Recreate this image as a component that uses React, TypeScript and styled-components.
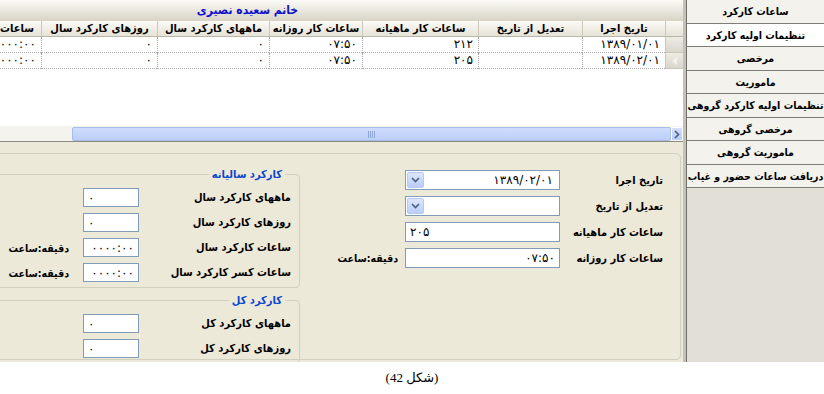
import React from 'react'
import styled, { createGlobalStyle } from 'styled-components'

const GlobalStyle = createGlobalStyle`
  html, body {
    margin: 0;
    padding: 0;
    background: #fff;
  }
  body {
    font-family: "DejaVu Sans Condensed", "DejaVu Sans", sans-serif;
    font-size: 11px;
    color: #000;
  }
`

const columns = [
  { title: 'تاریخ اجرا', width: 83 },
  { title: 'تعدیل از تاریخ', width: 104 },
  { title: 'ساعات کار ماهیانه', width: 116 },
  { title: 'ساعات کار روزانه', width: 93 },
  { title: 'ماههای کارکرد سال', width: 112 },
  { title: 'روزهای کارکرد سال', width: 116 },
  { title: 'ساعات کارکرد سال', width: 110 },
  { title: 'ساعات کسر کارکرد سال', width: 134 },
]

const rows = [
  ['۱۳۸۹/۰۱/۰۱', '', '۲۱۲', '۰۷:۵۰', '۰', '۰', '۰۰۰۰:۰۰', '۰۰۰۰:۰۰'],
  ['۱۳۸۹/۰۲/۰۱', '', '۲۰۵', '۰۷:۵۰', '۰', '۰', '۰۰۰۰:۰۰', '۰۰۰۰:۰۰'],
]

const navItems = [
  'ساعات کارکرد',
  'تنظیمات اولیه کارکرد',
  'مرخصی',
  'ماموریت',
  'تنظیمات اولیه کارکرد گروهی',
  'مرخصی گروهی',
  'ماموریت گروهی',
  'دریافت ساعات حضور و غیاب',
]

const Page = styled.div`
  width: 824px;
  height: 394px;
  overflow: hidden;
  direction: rtl;
  display: flex;
  flex-direction: column;
`

const Window = styled.div`
  height: 362px;
  flex: none;
  display: flex;
`

const Sidebar = styled.div`
  width: 138px;
  flex: none;
  box-sizing: border-box;
  border-left: 1px solid #6f6e68;
  background: #e2e0d6;
  display: flex;
  flex-direction: column;
`

const NavButton = styled.div<{ $active?: boolean }>`
  height: 23.5px;
  flex: none;
  box-sizing: border-box;
  border-bottom: 1px solid #7d7c75;
  background: ${p => (p.$active ? '#fff' : '#f3f2ec')};
  display: flex;
  align-items: center;
  justify-content: center;
  font-weight: bold;
  font-size: 10.5px;
  white-space: nowrap;
  overflow: hidden;
`

const Main = styled.div`
  width: 686px;
  flex: none;
  box-sizing: border-box;
  border-right: 3px solid #c4c2b8;
  display: flex;
  flex-direction: column;
  overflow: hidden;
`

const GridPanel = styled.div`
  height: 142px;
  flex: none;
  box-sizing: border-box;
  display: flex;
  flex-direction: column;
  background: #fff;
  border-bottom: 1px solid #8c8a80;
`

const GridClip = styled.div`
  flex: 1;
  min-height: 0;
  overflow: hidden;
`

const Sheet = styled.div`
  width: 886px;
`

const TitleBar = styled.div`
  height: 21px;
  box-sizing: border-box;
  padding-left: 15px;
  background: linear-gradient(#fbfaf6, #d7d4c6);
  color: #1212c8;
  font-weight: bold;
  font-size: 12px;
  text-align: center;
  line-height: 21px;
`

const Table = styled.div<{ $cols: string }>`
  display: grid;
  grid-template-columns: ${p => p.$cols};
  grid-auto-rows: 16px;
`

const HeaderCell = styled.div`
  box-sizing: border-box;
  background: linear-gradient(#fbfaf5, #e6e3d7);
  border-left: 1px solid #cbc8b8;
  border-bottom: 1px solid #b9b6a7;
  font-weight: bold;
  font-size: 11px;
  line-height: 15px;
  text-align: center;
  white-space: nowrap;
  overflow: hidden;
`

const RowHead = styled.div`
  box-sizing: border-box;
  background: linear-gradient(#eeece3, #d9d7cc);
  border-left: 1px solid #c9c7bc;
  border-bottom: 1px solid #c9c7bc;
  display: flex;
  align-items: center;
  justify-content: center;
`

const Cell = styled.div`
  box-sizing: border-box;
  border-left: 1px dotted #a9a9a9;
  border-bottom: 1px dotted #a9a9a9;
  padding: 0 5px;
  font-family: "DejaVu Sans", sans-serif;
  font-size: 12px;
  letter-spacing: 0.5px;
  line-height: 15px;
  text-align: right;
  white-space: nowrap;
  overflow: hidden;
`

const HScroll = styled.div`
  height: 15px;
  flex: none;
  box-sizing: border-box;
  padding: 1px 0 0;
  display: flex;
  background: #f4f3ee;
`

const ScrollArrow = styled.div`
  width: 12px;
  flex: none;
  box-sizing: border-box;
  border: 1px solid #fff;
  border-radius: 2px;
  background: linear-gradient(#d3defc, #b8cbf7);
  display: flex;
  align-items: center;
  justify-content: center;
`

const ScrollThumb = styled.div`
  width: 599px;
  flex: none;
  box-sizing: border-box;
  border: 1px solid #a8bde8;
  border-radius: 2px;
  background: linear-gradient(#cfdcfd, #bccff9);
  display: flex;
  align-items: center;
  justify-content: center;
`

const FormPanel = styled.div`
  flex: 1;
  box-sizing: border-box;
  background: #ece9d8;
  padding: 11px 2px 2px 0;
  display: flex;
  overflow: hidden;
`

const Frame = styled.div`
  width: 720px;
  flex: none;
  box-sizing: border-box;
  border: 1px solid #d0d0bf;
  border-radius: 5px;
  padding-right: 17px;
  display: flex;
`

const MainForm = styled.div`
  flex: none;
  padding-top: 16px;
  display: grid;
  grid-template-columns: 103px 155px 68px;
  grid-auto-rows: 20px;
  row-gap: 6px;
  align-content: start;
`

const Label = styled.div`
  font-weight: bold;
  font-size: 11px;
  white-space: nowrap;
  display: flex;
  align-items: center;
`

const Unit = styled.div<{ $gap: number }>`
  font-weight: bold;
  font-size: 10.5px;
  white-space: nowrap;
  margin-right: ${p => p.$gap}px;
  display: flex;
  align-items: center;
`

const Field = styled.div<{ $align?: 'left' | 'right' }>`
  box-sizing: border-box;
  border: 1px solid #7f9db9;
  background: #fff;
  padding: 0 4px;
  font-family: "DejaVu Sans", sans-serif;
  font-size: 12px;
  letter-spacing: 0.5px;
  display: flex;
  align-items: center;
  justify-content: ${p => (p.$align === 'left' ? 'flex-end' : 'flex-start')};
  white-space: nowrap;
  overflow: hidden;
`

const ComboValue = styled.div`
  flex: 1;
  text-align: right;
  padding-right: 2px;
`

const DropButton = styled.div`
  width: 17px;
  height: 16px;
  flex: none;
  margin-left: -3px;
  box-sizing: border-box;
  border: 1px solid #b7c9f3;
  border-radius: 2px;
  background: linear-gradient(#dde7fd, #b9cdf8);
  display: flex;
  align-items: center;
  justify-content: center;
`

const SideGroups = styled.div`
  flex: 1;
  margin-right: 37px;
  padding-top: 14px;
  display: flex;
  flex-direction: column;
`

const Group = styled.fieldset`
  margin: 0 0 6px;
  padding: 7px 8px 5px 0;
  border: 1px solid #d0d0bf;
  border-radius: 4px;
  min-inline-size: 0;
`

const GroupTitle = styled.legend`
  color: #0b46d0;
  font-weight: bold;
  font-size: 11px;
  line-height: 13px;
  padding: 0 3px;
  margin-right: 6px;
`

const GroupGrid = styled.div`
  display: grid;
  grid-template-columns: 152px 56px auto;
  grid-auto-rows: 19px;
  row-gap: 6px;
`

const Caption = styled.div`
  flex: 1;
  padding-top: 8px;
  text-align: center;
  font-family: "Liberation Serif", "DejaVu Sans", serif;
  font-size: 13px;
  line-height: 16px;
`

function Chevron() {
  return (
    <svg width="9" height="6" viewBox="0 0 9 6">
      <path d="M1 1 L4.5 4.5 L8 1" fill="none" stroke="#4d6185" strokeWidth="1.7" />
    </svg>
  )
}

function RightArrow() {
  return (
    <svg width="6" height="9" viewBox="0 0 6 9">
      <path d="M1 1 L4.5 4.5 L1 8" fill="none" stroke="#4d6185" strokeWidth="1.7" />
    </svg>
  )
}

function Grip() {
  return (
    <svg width="8" height="7" viewBox="0 0 8 7">
      {[0, 2, 4, 6].map(x => (
        <rect key={x} x={x} y="0" width="1" height="7" fill="#8fa6d8" />
      ))}
    </svg>
  )
}

function RowMark() {
  return (
    <svg width="6" height="8" viewBox="0 0 6 8">
      <polygon points="5,0 5,8 0,4" fill="#f3f2ec" />
    </svg>
  )
}

function Combo({ value }: { value: string }) {
  return (
    <Field>
      <ComboValue>{value}</ComboValue>
      <DropButton>
        <Chevron />
      </DropButton>
    </Field>
  )
}

export default function App() {
  const cols = '18px ' + columns.map(c => c.width + 'px').join(' ')
  return (
    <Page>
      <GlobalStyle />
      <Window>
        <Sidebar>
          {navItems.map((item, i) => (
            <NavButton key={item} $active={i === 1}>
              {item}
            </NavButton>
          ))}
        </Sidebar>
        <Main>
          <GridPanel>
            <GridClip>
              <Sheet>
                <TitleBar>خانم سعیده نصیری</TitleBar>
                <Table $cols={cols}>
                  <HeaderCell />
                  {columns.map(c => (
                    <HeaderCell key={c.title}>{c.title}</HeaderCell>
                  ))}
                  {rows.map((row, r) => (
                    <React.Fragment key={r}>
                      <RowHead>{r === 1 && <RowMark />}</RowHead>
                      {row.map((v, i) => (
                        <Cell key={i}>{v}</Cell>
                      ))}
                    </React.Fragment>
                  ))}
                </Table>
              </Sheet>
            </GridClip>
            <HScroll>
              <ScrollArrow>
                <RightArrow />
              </ScrollArrow>
              <ScrollThumb>
                <Grip />
              </ScrollThumb>
            </HScroll>
          </GridPanel>
          <FormPanel>
            <Frame>
              <MainForm>
                <Label>تاریخ اجرا</Label>
                <Combo value="۱۳۸۹/۰۲/۰۱" />
                <span />
                <Label>تعدیل از تاریخ</Label>
                <Combo value="" />
                <span />
                <Label>ساعات کار ماهیانه</Label>
                <Field $align="left">۲۰۵</Field>
                <span />
                <Label>ساعات کار روزانه</Label>
                <Field>۰۷:۵۰</Field>
                <Unit $gap={7}>دقیقه:ساعت</Unit>
              </MainForm>
              <SideGroups>
                <Group>
                  <GroupTitle>کارکرد سالیانه</GroupTitle>
                  <GroupGrid>
                    <Label>ماههای کارکرد سال</Label>
                    <Field $align="left">۰</Field>
                    <span />
                    <Label>روزهای کارکرد سال</Label>
                    <Field $align="left">۰</Field>
                    <span />
                    <Label>ساعات کارکرد سال</Label>
                    <Field>۰۰۰۰:۰۰</Field>
                    <Unit $gap={14}>دقیقه:ساعت</Unit>
                    <Label>ساعات کسر کارکرد سال</Label>
                    <Field>۰۰۰۰:۰۰</Field>
                    <Unit $gap={14}>دقیقه:ساعت</Unit>
                  </GroupGrid>
                </Group>
                <Group>
                  <GroupTitle>کارکرد کل</GroupTitle>
                  <GroupGrid>
                    <Label>ماههای کارکرد کل</Label>
                    <Field $align="left">۰</Field>
                    <span />
                    <Label>روزهای کارکرد کل</Label>
                    <Field $align="left">۰</Field>
                    <span />
                  </GroupGrid>
                </Group>
              </SideGroups>
            </Frame>
          </FormPanel>
        </Main>
      </Window>
      <Caption>(شکل 42)</Caption>
    </Page>
  )
}
